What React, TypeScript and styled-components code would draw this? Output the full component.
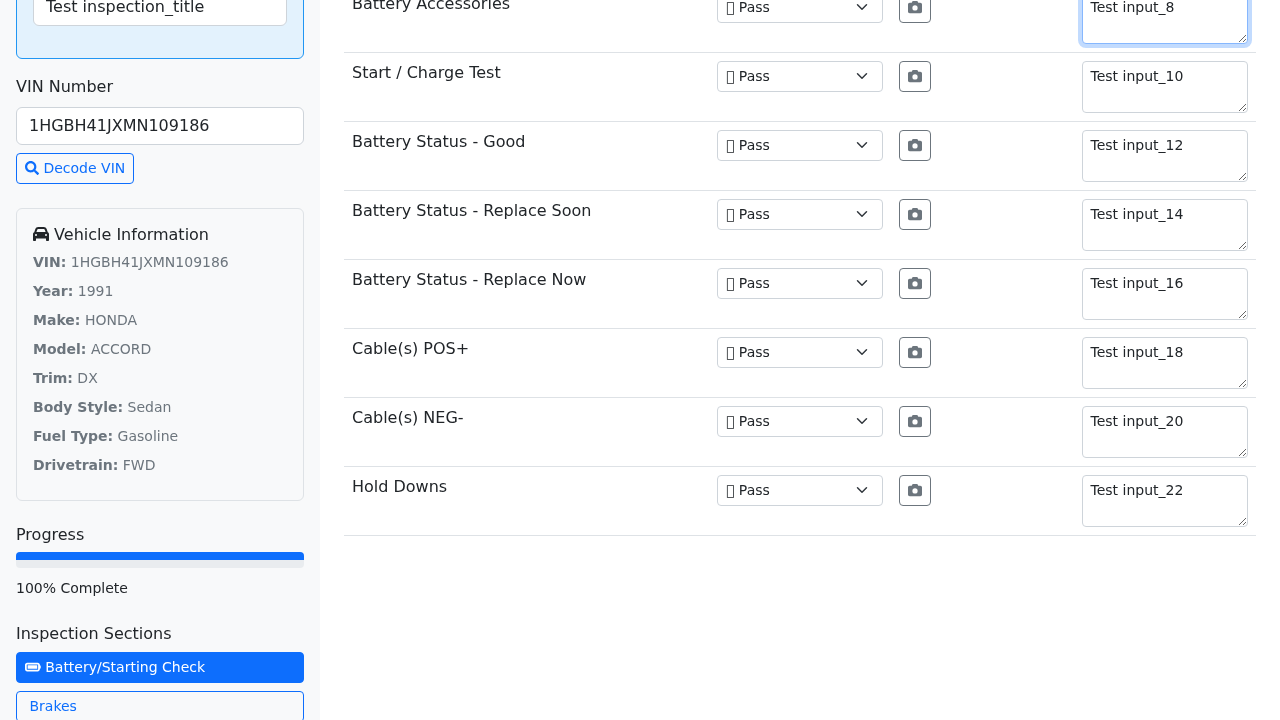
import React from "react";
import styled, { createGlobalStyle } from "styled-components";
import { FaBatteryFull, FaCamera, FaCar } from "react-icons/fa6";
import { FaSearch } from "react-icons/fa";

const Global = createGlobalStyle`
  * { box-sizing: border-box; }
  html, body { margin: 0; height: 720px; overflow: hidden; background: #fff; }
  body {
    font-family: "DejaVu Sans", sans-serif;
    font-size: 16px;
    line-height: 1.5;
    color: #212529;
  }
`;

const Page = styled.div`
  display: flex;
  height: 720px;
  overflow: hidden;
  will-change: transform;
`;

const Sidebar = styled.aside`
  flex: 0 0 320px;
  height: 720px;
  overflow: hidden;
  padding: 0 16px;
  background: #f8f9fa;
`;

const TitleBox = styled.section`
  margin-top: -60.4px;
  margin-bottom: 16px;
  padding: 16px;
  height: 119px;
  background: #e3f2fd;
  border: 1px solid #2196f3;
  border-radius: 6px;
`;

const FieldLabel = styled.label`
  display: block;
  margin-bottom: 8px;
`;

const TextInput = styled.input`
  display: block;
  width: 100%;
  height: 38px;
  padding: 6px 12px;
  font: inherit;
  color: #212529;
  background: #fff;
  border: 1px solid #ced4da;
  border-radius: 6px;
  outline: none;
`;

const TitleInput = styled(TextInput)`
  margin-top: 31px;
`;

const DecodeButton = styled.button`
  display: inline-block;
  margin-top: 8px;
  padding: 4px 8px;
  height: 31px;
  font: inherit;
  font-size: 14px;
  line-height: 21px;
  color: #0d6efd;
  background: transparent;
  border: 1px solid #0d6efd;
  border-radius: 4px;
  svg { width: 14px; height: 14px; vertical-align: -2px; }
`;

const VehicleCard = styled.section`
  margin-top: 24px;
  margin-bottom: 22px;
  padding: 16px;
  border: 1px solid #dee2e6;
  border-radius: 6px;
`;

const CardTitle = styled.h6`
  margin: 0 0 8px;
  font-size: 16px;
  font-weight: 400;
  line-height: 19.2px;
  svg { width: 16px; height: 16px; vertical-align: -2px; }
`;

const Fact = styled.p`
  margin: 0 0 8px;
  font-size: 14px;
  line-height: 21px;
  color: #6c757d;
`;

const Heading = styled.div<{ $gap: number }>`
  margin-bottom: ${(p) => p.$gap}px;
`;

const Track = styled.div`
  height: 16px;
  overflow: hidden;
  background: #e9ecef;
  border-radius: 4px;
`;

const Fill = styled.div`
  height: 8px;
  background: #0d6efd;
`;

const Note = styled.div`
  margin-top: 10px;
  margin-bottom: 23px;
  font-size: 14px;
  line-height: 21px;
`;

const SectionList = styled.div`
  display: flex;
  flex-direction: column;
  gap: 8px;
`;

const SectionButton = styled.button<{ $active?: boolean }>`
  display: block;
  width: 100%;
  height: 31px;
  flex: none;
  padding: 4px 8px;
  font: inherit;
  font-size: 14px;
  line-height: 21px;
  text-align: left;
  color: ${(p) => (p.$active ? "#fff" : "#0d6efd")};
  background: ${(p) => (p.$active ? "#0d6efd" : "transparent")};
  border: 1px solid #0d6efd;
  border-radius: 4px;
  svg { width: 15.75px; height: 14px; vertical-align: -2px; }
`;

const EmptyIcon = styled.i`
  display: inline-block;
`;

const Main = styled.main`
  flex: 1;
  min-width: 0;
  height: 720px;
  overflow: hidden;
  padding: 0 24px;
`;

const Row = styled.div`
  display: grid;
  grid-template-columns: 365px 182px 182.5px 182.5px;
  height: 69px;
  border-bottom: 1px solid #dee2e6;
  &:first-child { margin-top: -16.4px; }
`;

const Cell = styled.div`
  padding: 8px;
`;

const Select = styled.select`
  display: block;
  width: 100%;
  height: 31px;
  padding: 4px 36px 4px 8px;
  font: inherit;
  font-size: 14px;
  line-height: 21px;
  color: #212529;
  appearance: none;
  background: #fff url("data:image/svg+xml,%3csvg xmlns='http://www.w3.org/2000/svg' viewBox='0 0 16 16'%3e%3cpath fill='none' stroke='%23343a40' stroke-linecap='round' stroke-linejoin='round' stroke-width='2' d='m2 5 6 6 6-6'/%3e%3c/svg%3e") no-repeat right 12px center / 16px 12px;
  border: 1px solid #ced4da;
  border-radius: 4px;
  outline: none;
`;

const CameraButton = styled.button`
  display: block;
  width: 32px;
  height: 31px;
  padding: 4px 8px;
  font-size: 14px;
  line-height: 21px;
  color: #6c757d;
  background: transparent;
  border: 1px solid #6c757d;
  border-radius: 4px;
  svg { display: inline-block; width: 14px; height: 14px; vertical-align: -2px; }
`;

const Notes = styled.textarea<{ $focused?: boolean }>`
  display: block;
  width: 100%;
  height: 52px;
  padding: 4px 8px;
  font: inherit;
  font-size: 14px;
  line-height: 21px;
  color: #212529;
  background: #fff;
  border: 1px solid ${(p) => (p.$focused ? "#86b7fe" : "#ced4da")};
  border-radius: 4px;
  outline: none;
  box-shadow: ${(p) => (p.$focused ? "0 0 0 4px rgba(13, 110, 253, 0.25)" : "none")};
`;

const rows: [string, string][] = [
  ["Battery Accessories", "Test input_8"],
  ["Start / Charge Test", "Test input_10"],
  ["Battery Status - Good", "Test input_12"],
  ["Battery Status - Replace Soon", "Test input_14"],
  ["Battery Status - Replace Now", "Test input_16"],
  ["Cable(s) POS+", "Test input_18"],
  ["Cable(s) NEG-", "Test input_20"],
  ["Hold Downs", "Test input_22"],
];

const facts: [string, string][] = [
  ["VIN:", "1HGBH41JXMN109186"],
  ["Year:", "1991"],
  ["Make:", "HONDA"],
  ["Model:", "ACCORD"],
  ["Trim:", "DX"],
  ["Body Style:", "Sedan"],
  ["Fuel Type:", "Gasoline"],
  ["Drivetrain:", "FWD"],
];

export default function App() {
  return (
    <>
      <Global />
      <Page>
        <Sidebar>
          <TitleBox>
            <TitleInput defaultValue="Test inspection_title" />
          </TitleBox>
          <FieldLabel>VIN Number</FieldLabel>
          <TextInput defaultValue="1HGBH41JXMN109186" />
          <DecodeButton>
            <FaSearch /> Decode VIN
          </DecodeButton>
          <VehicleCard>
            <CardTitle>
              <FaCar /> Vehicle Information
            </CardTitle>
            {facts.map(([k, v]) => (
              <Fact key={k}>
                <strong>{k}</strong> {v}
              </Fact>
            ))}
          </VehicleCard>
          <Heading $gap={5}>Progress</Heading>
          <Track>
            <Fill />
          </Track>
          <Note>100% Complete</Note>
          <Heading $gap={6}>Inspection Sections</Heading>
          <SectionList>
            <SectionButton $active>
              <FaBatteryFull /> Battery/Starting Check
            </SectionButton>
            <SectionButton>
              <EmptyIcon /> Brakes
            </SectionButton>
          </SectionList>
        </Sidebar>
        <Main>
          {rows.map(([name, note], i) => (
            <Row key={name}>
              <Cell>{name}</Cell>
              <Cell>
                <Select defaultValue="pass">
                  <option value="pass">{"\uE000"} Pass</option>
                </Select>
              </Cell>
              <Cell>
                <CameraButton aria-label="Add photo">
                  <FaCamera />
                </CameraButton>
              </Cell>
              <Cell>
                <Notes $focused={i === 0} defaultValue={note} />
              </Cell>
            </Row>
          ))}
        </Main>
      </Page>
    </>
  );
}
